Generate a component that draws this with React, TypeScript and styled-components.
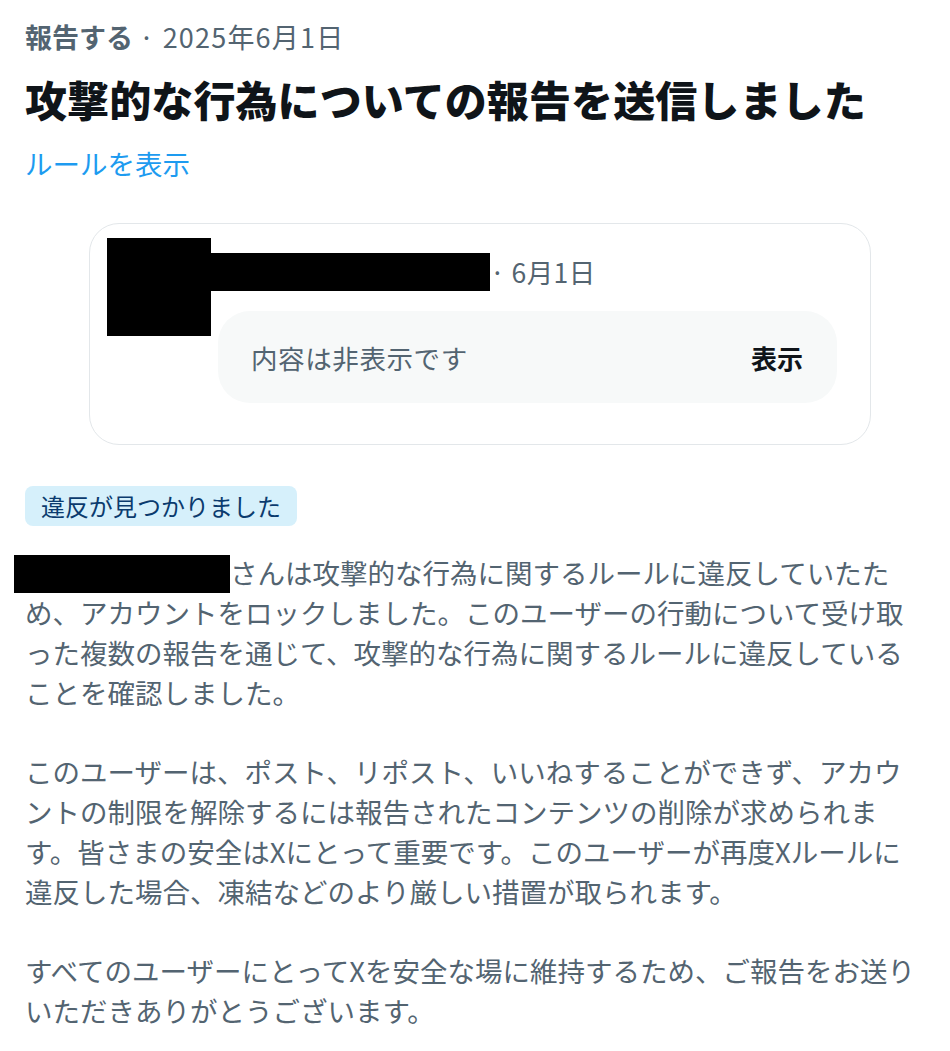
import React from "react";
import styled, { createGlobalStyle } from "styled-components";

const GlobalStyle = createGlobalStyle`
  html, body {
    margin: 0;
    padding: 0;
    background: #ffffff;
  }
  body {
    font-family: "Noto Sans CJK JP", "Noto Sans", sans-serif;
    -webkit-font-smoothing: antialiased;
  }
`;

const Page = styled.main`
  width: 950px;
  box-sizing: border-box;
  padding: 18px 25px 20px 25px;
  display: flex;
  flex-direction: column;
  color: #0f1419;
`;

const MetaLine = styled.div`
  font-size: 27px;
  line-height: 38px;
  color: #536471;
`;

const MetaStrong = styled.span`
  font-weight: 700;
`;

const MetaDate = styled.span`
  letter-spacing: 1.2px;
`;

const Title = styled.h1`
  margin: 17px 0 0 0;
  font-size: 42px;
  line-height: 52px;
  font-weight: 900;
  color: #0f1419;
  letter-spacing: 0.1px;
`;

const RuleLink = styled.a`
  margin-top: 18px;
  font-size: 27.5px;
  line-height: 40px;
  color: #1d9bf0;
  text-decoration: none;
  align-self: flex-start;
  cursor: pointer;
`;

const Card = styled.section`
  margin: 40px 0 0 64px;
  width: 782px;
  box-sizing: border-box;
  border: 1.5px solid #e3e7ea;
  border-radius: 30px;
  padding: 14px 33px 41px 17px;
  display: flex;
  align-items: flex-start;
`;

const Redact = styled.span<{ $w: number; $h: number }>`
  display: inline-block;
  flex-shrink: 0;
  width: ${(p) => p.$w}px;
  height: ${(p) => p.$h}px;
  background: #000000;
`;

const CardBody = styled.div`
  flex: 1;
  margin-left: 7px;
  padding-top: 15px;
  display: flex;
  flex-direction: column;
`;

const NameRow = styled.div`
  margin-left: -7px;
  height: 38px;
  display: flex;
  align-items: center;
`;

const PostDate = styled.span`
  font-size: 26.5px;
  line-height: 38px;
  color: #536471;
  white-space: nowrap;
  letter-spacing: 0.4px;
`;

const HiddenBox = styled.div`
  margin-top: 20px;
  height: 92px;
  border-radius: 32px;
  background: #f7f9f9;
  display: flex;
  align-items: center;
  justify-content: space-between;
  padding: 0 34px 0 33px;
`;

const HiddenText = styled.span`
  font-size: 26.5px;
  color: #536471;
  letter-spacing: 0.6px;
`;

const ShowButton = styled.button`
  border: none;
  background: transparent;
  padding: 0;
  font-family: inherit;
  font-size: 26px;
  font-weight: 700;
  color: #0f1419;
  cursor: pointer;
`;

const Badge = styled.div`
  margin-top: 41px;
  align-self: flex-start;
  height: 40px;
  box-sizing: border-box;
  padding: 0 16px;
  border-radius: 8px;
  background: #d6f0fb;
  color: #0b3b6e;
  font-size: 24px;
  line-height: 40px;
`;

const Body = styled.div`
  margin-top: 27px;
  font-size: 27.5px;
  line-height: 39.8px;
  color: #536471;
  text-spacing-trim: space-all;
  line-break: normal;
  word-break: normal;
`;

const Paragraph = styled.p`
  margin: 0 0 39.8px 0;
  &:last-child {
    margin-bottom: 0;
  }
`;

const InlineRedact = styled.span`
  display: inline-block;
  width: 216px;
  height: 38px;
  margin-left: -11px;
  background: #000000;
  vertical-align: -9px;
`;

export default function App() {
  return (
    <>
      <GlobalStyle />
      <Page>
        <MetaLine>
          <MetaStrong>報告する</MetaStrong> <MetaDate>· 2025年6月1日</MetaDate>
        </MetaLine>
        <Title>攻撃的な行為についての報告を送信しました</Title>
        <RuleLink>ルールを表示</RuleLink>

        <Card>
          <Redact $w={104} $h={98} />
          <CardBody>
            <NameRow>
              <Redact $w={279} $h={38} />
              <PostDate>· 6月1日</PostDate>
            </NameRow>
            <HiddenBox>
              <HiddenText>内容は非表示です</HiddenText>
              <ShowButton>表示</ShowButton>
            </HiddenBox>
          </CardBody>
        </Card>

        <Badge>違反が見つかりました</Badge>

        <Body>
          <Paragraph>
            <InlineRedact />
            さんは攻撃的な行為に関するルールに違反していたため、アカウントをロックしました。このユーザーの行動について受け取った複数の報告を通じて、攻撃的な行為に関するルールに違反していることを確認しました。
          </Paragraph>
          <Paragraph>
            このユーザーは、ポスト、リポスト、いいねすることができず、アカウントの制限を解除するには報告されたコンテンツの削除が求められます。皆さまの安全はXにとって重要です。このユーザーが再度Xルールに違反した場合、凍結などのより厳しい措置が取られます。
          </Paragraph>
          <Paragraph>
            すべてのユーザーにとってXを安全な場に維持するため、ご報告をお送りいただきありがとうございます。
          </Paragraph>
        </Body>
      </Page>
    </>
  );
}
